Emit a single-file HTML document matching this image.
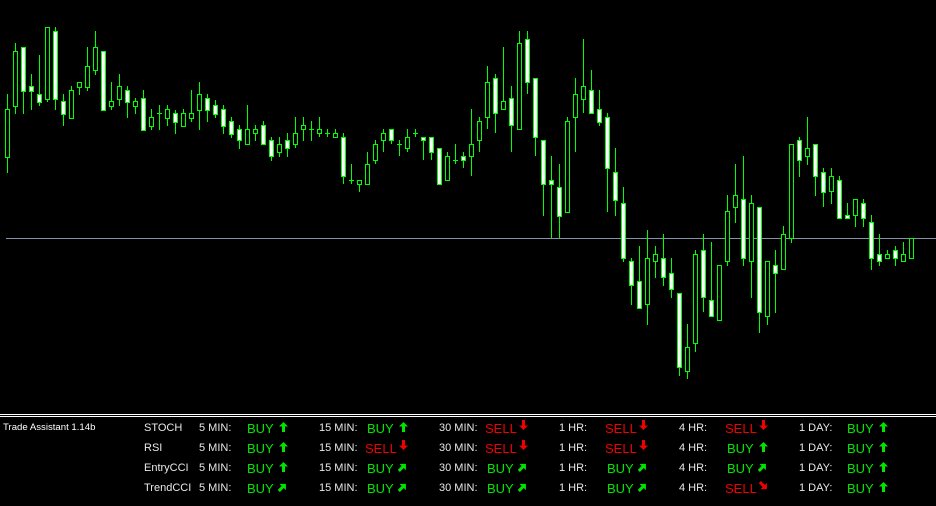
<!DOCTYPE html>
<html><head><meta charset="utf-8"><style>
html,body{margin:0;padding:0;background:#000;width:936px;height:506px;overflow:hidden;position:relative;font-family:"Liberation Sans",Arial,sans-serif}
svg.c{position:absolute;left:0;top:0}
.t{position:absolute;color:#fff;font-size:11px;line-height:12px;white-space:nowrap}
.l{color:#e8e8e8}
</style></head><body>
<svg class="c" width="936" height="506" viewBox="0 0 936 506" shape-rendering="crispEdges">
<line x1="6" y1="238.5" x2="936" y2="238.5" stroke="#8592a8" stroke-width="1"/>
<path stroke="#00ff00" stroke-width="1" fill="none" d="M7.5 94V173M15.5 43V114M23.5 47V114M31.5 74V110M39.5 55V106M47.5 27V102M55.5 27V110M63.5 94V126M71.5 86V118M79.5 82V95M87.5 47V91M95.5 31V75M103.5 51V110M111.5 82V110M119.5 74V106M127.5 86V118M135.5 98V114M143.5 90V130M151.5 109V130M159.5 105V130M167.5 105V126M175.5 110V134M183.5 109V126M191.5 90V122M199.5 82V130M207.5 94V122M215.5 100V118M223.5 105V134M231.5 117V138M239.5 125V149M247.5 105V144M255.5 125V141M263.5 121V144M271.5 137V161M279.5 137V157M287.5 133V157M295.5 117V148M303.5 117V141M311.5 121V141M319.5 117V137M327.5 129V137M335.5 129V137M343.5 133V184M351.5 164V184M359.5 180V192M367.5 152V184M375.5 140V164M383.5 129V152M391.5 129V144M399.5 140V156M407.5 129V152M415.5 129V137M423.5 137V160M431.5 137V160M439.5 148V184M447.5 152V180M455.5 144V164M463.5 152V168M471.5 109V176M479.5 117V152M487.5 66V129M495.5 74V133M503.5 47V109M511.5 86V152M519.5 31V129M527.5 31V94M535.5 78V156M543.5 140V216M551.5 156V238M559.5 164V238M567.5 117V212M575.5 78V152M583.5 39V113M591.5 70V113M599.5 90V126M607.5 113V212M615.5 148V216M623.5 187V262M631.5 258V305M639.5 246V308M647.5 230V325M655.5 246V278M663.5 234V286M671.5 258V298M679.5 293V376M687.5 324V379M695.5 250V352M703.5 234V312M711.5 242V316M719.5 265V320M727.5 195V266M735.5 164V223M743.5 156V266M751.5 195V298M759.5 207V333M767.5 261V325M775.5 250V313M783.5 226V269M791.5 144V243M799.5 137V177M807.5 117V165M815.5 144V196M823.5 168V207M831.5 168V204M839.5 176V218M847.5 203V218M855.5 199V227M863.5 199V227M871.5 215V270M879.5 234V266M887.5 250V258M895.5 246V266M903.5 242V261M911.5 238V258
M157 113.5H162M309 129.5H314M325 133.5H330M349 180.5H354M397 144.5H402M413 133.5H418M453 160.5H458"/>
<g stroke="#00ff00" stroke-width="1" fill="#000">
<rect x="5.5" y="109.5" width="4" height="48"/><rect x="13.5" y="51.5" width="4" height="55"/><rect x="45.5" y="27.5" width="4" height="72"/><rect x="69.5" y="90.5" width="4" height="28"/><rect x="77.5" y="82.5" width="4" height="5"/><rect x="85.5" y="66.5" width="4" height="21"/><rect x="93.5" y="47.5" width="4" height="23"/><rect x="109.5" y="101.5" width="4" height="5"/><rect x="117.5" y="86.5" width="4" height="13"/><rect x="133.5" y="101.5" width="4" height="5"/><rect x="149.5" y="117.5" width="4" height="9"/><rect x="165.5" y="109.5" width="4" height="9"/><rect x="181.5" y="113.5" width="4" height="13"/><rect x="189.5" y="113.5" width="4" height="5"/><rect x="197.5" y="94.5" width="4" height="16"/><rect x="245.5" y="129.5" width="4" height="15"/><rect x="253.5" y="129.5" width="4" height="4"/><rect x="277.5" y="144.5" width="4" height="8"/><rect x="293.5" y="133.5" width="4" height="11"/><rect x="301.5" y="125.5" width="4" height="4"/><rect x="317.5" y="129.5" width="4" height="4"/><rect x="333.5" y="133.5" width="4" height="4"/><rect x="357.5" y="180.5" width="4" height="4"/><rect x="365.5" y="164.5" width="4" height="20"/><rect x="373.5" y="144.5" width="4" height="16"/><rect x="381.5" y="133.5" width="4" height="7"/><rect x="405.5" y="137.5" width="4" height="11"/><rect x="445.5" y="156.5" width="4" height="24"/><rect x="469.5" y="144.5" width="4" height="12"/><rect x="477.5" y="121.5" width="4" height="19"/><rect x="485.5" y="82.5" width="4" height="35"/><rect x="501.5" y="101.5" width="4" height="8"/><rect x="517.5" y="43.5" width="4" height="86"/><rect x="565.5" y="121.5" width="4" height="91"/><rect x="573.5" y="94.5" width="4" height="23"/><rect x="581.5" y="86.5" width="4" height="13"/><rect x="645.5" y="258.5" width="4" height="46"/><rect x="653.5" y="254.5" width="4" height="7"/><rect x="685.5" y="347.5" width="4" height="24"/><rect x="693.5" y="254.5" width="4" height="89"/><rect x="717.5" y="265.5" width="4" height="55"/><rect x="725.5" y="211.5" width="4" height="50"/><rect x="733.5" y="195.5" width="4" height="12"/><rect x="749.5" y="203.5" width="4" height="58"/><rect x="765.5" y="261.5" width="4" height="55"/><rect x="781.5" y="234.5" width="4" height="35"/><rect x="789.5" y="144.5" width="4" height="94"/><rect x="805.5" y="148.5" width="4" height="8"/><rect x="829.5" y="176.5" width="4" height="15"/><rect x="853.5" y="199.5" width="4" height="16"/><rect x="885.5" y="254.5" width="4" height="4"/><rect x="901.5" y="254.5" width="4" height="7"/><rect x="909.5" y="238.5" width="4" height="20"/>
</g>
<g stroke="#00ff00" stroke-width="1" fill="#fff">
<rect x="21.5" y="47.5" width="4" height="44"/><rect x="29.5" y="86.5" width="4" height="5"/><rect x="37.5" y="94.5" width="4" height="8"/><rect x="53.5" y="31.5" width="4" height="68"/><rect x="61.5" y="101.5" width="4" height="13"/><rect x="101.5" y="51.5" width="4" height="59"/><rect x="125.5" y="90.5" width="4" height="12"/><rect x="141.5" y="98.5" width="4" height="32"/><rect x="173.5" y="113.5" width="4" height="9"/><rect x="205.5" y="98.5" width="4" height="12"/><rect x="213.5" y="105.5" width="4" height="9"/><rect x="221.5" y="109.5" width="4" height="17"/><rect x="229.5" y="121.5" width="4" height="13"/><rect x="237.5" y="129.5" width="4" height="11"/><rect x="261.5" y="125.5" width="4" height="19"/><rect x="269.5" y="140.5" width="4" height="16"/><rect x="285.5" y="140.5" width="4" height="8"/><rect x="341.5" y="137.5" width="4" height="39"/><rect x="389.5" y="129.5" width="4" height="11"/><rect x="421.5" y="137.5" width="4" height="3"/><rect x="429.5" y="137.5" width="4" height="15"/><rect x="437.5" y="148.5" width="4" height="36"/><rect x="461.5" y="156.5" width="4" height="4"/><rect x="493.5" y="78.5" width="4" height="35"/><rect x="509.5" y="98.5" width="4" height="27"/><rect x="525.5" y="39.5" width="4" height="43"/><rect x="533.5" y="78.5" width="4" height="59"/><rect x="541.5" y="140.5" width="4" height="44"/><rect x="549.5" y="180.5" width="4" height="4"/><rect x="557.5" y="187.5" width="4" height="29"/><rect x="589.5" y="90.5" width="4" height="23"/><rect x="597.5" y="109.5" width="4" height="13"/><rect x="605.5" y="117.5" width="4" height="51"/><rect x="613.5" y="172.5" width="4" height="28"/><rect x="621.5" y="203.5" width="4" height="55"/><rect x="629.5" y="261.5" width="4" height="24"/><rect x="637.5" y="281.5" width="4" height="27"/><rect x="661.5" y="258.5" width="4" height="19"/><rect x="669.5" y="273.5" width="4" height="16"/><rect x="677.5" y="293.5" width="4" height="74"/><rect x="701.5" y="250.5" width="4" height="47"/><rect x="709.5" y="300.5" width="4" height="16"/><rect x="741.5" y="199.5" width="4" height="59"/><rect x="757.5" y="207.5" width="4" height="105"/><rect x="773.5" y="265.5" width="4" height="8"/><rect x="797.5" y="140.5" width="4" height="20"/><rect x="813.5" y="144.5" width="4" height="32"/><rect x="821.5" y="172.5" width="4" height="20"/><rect x="837.5" y="180.5" width="4" height="38"/><rect x="845.5" y="215.5" width="4" height="3"/><rect x="861.5" y="203.5" width="4" height="15"/><rect x="869.5" y="222.5" width="4" height="36"/><rect x="877.5" y="254.5" width="4" height="7"/><rect x="893.5" y="250.5" width="4" height="8"/>
</g>
<rect x="0" y="414" width="936" height="1" fill="#fff"/>
<rect x="0" y="416" width="936" height="1" fill="#fff"/>
</svg>

<div class="t" style="left:3px;top:422px;font-size:9.6px">Trade Assistant 1.14b</div>

<div class="t l" style="left:144px;top:422px">STOCH</div>
<div class="t l" style="left:144px;top:442px">RSI</div>
<div class="t l" style="left:144px;top:462px">EntryCCI</div>
<div class="t l" style="left:144px;top:482px">TrendCCI</div>

<svg class="c" width="936" height="506" viewBox="0 0 936 506" style="font-family:'Liberation Sans',Arial,sans-serif">
<defs><path id="ar" d="M4.5 0L9 4.5H6V10H3V4.5H0Z"/></defs>
<g fill="#e8e8e8" font-size="11">
<text x="199" y="431">5 MIN:</text><text x="199" y="451">5 MIN:</text><text x="199" y="471">5 MIN:</text><text x="199" y="491">5 MIN:</text>
<text x="319" y="431">15 MIN:</text><text x="319" y="451">15 MIN:</text><text x="319" y="471">15 MIN:</text><text x="319" y="491">15 MIN:</text>
<text x="439" y="431">30 MIN:</text><text x="439" y="451">30 MIN:</text><text x="439" y="471">30 MIN:</text><text x="439" y="491">30 MIN:</text>
<text x="559" y="431">1 HR:</text><text x="559" y="451">1 HR:</text><text x="559" y="471">1 HR:</text><text x="559" y="491">1 HR:</text>
<text x="679" y="431">4 HR:</text><text x="679" y="451">4 HR:</text><text x="679" y="471">4 HR:</text><text x="679" y="491">4 HR:</text>
<text x="799" y="431">1 DAY:</text><text x="799" y="451">1 DAY:</text><text x="799" y="471">1 DAY:</text><text x="799" y="491">1 DAY:</text>
</g>
<g font-size="13" fill="#00e600">
<text x="247" y="433">BUY</text><text x="367" y="433">BUY</text><text x="847" y="433">BUY</text>
<text x="247" y="453">BUY</text><text x="727" y="453">BUY</text><text x="847" y="453">BUY</text>
<text x="247" y="473">BUY</text><text x="367" y="473">BUY</text><text x="487" y="473">BUY</text><text x="607" y="473">BUY</text><text x="727" y="473">BUY</text><text x="847" y="473">BUY</text>
<text x="247" y="493">BUY</text><text x="367" y="493">BUY</text><text x="487" y="493">BUY</text><text x="607" y="493">BUY</text><text x="847" y="493">BUY</text>
</g>
<g font-size="13" fill="#f00000">
<text x="485" y="433">SELL</text><text x="605" y="433">SELL</text><text x="725" y="433">SELL</text>
<text x="365" y="453">SELL</text><text x="485" y="453">SELL</text><text x="605" y="453">SELL</text>
<text x="725" y="493">SELL</text>
</g>
<g fill="#00e600">
<use href="#ar" x="279" y="422"/><use href="#ar" x="399" y="422"/><use href="#ar" x="879" y="422"/>
<use href="#ar" x="279" y="442"/><use href="#ar" x="759" y="442"/><use href="#ar" x="879" y="442"/>
<use href="#ar" x="279" y="462"/><use href="#ar" x="879" y="462"/><use href="#ar" x="879" y="482"/>
<use href="#ar" transform="rotate(45 402 467)" x="398" y="462"/>
<use href="#ar" transform="rotate(45 522 467)" x="518" y="462"/>
<use href="#ar" transform="rotate(45 642 467)" x="638" y="462"/>
<use href="#ar" transform="rotate(45 762 467)" x="758" y="462"/>
<use href="#ar" transform="rotate(45 282 487)" x="278" y="482"/>
<use href="#ar" transform="rotate(45 402 487)" x="398" y="482"/>
<use href="#ar" transform="rotate(45 522 487)" x="518" y="482"/>
<use href="#ar" transform="rotate(45 642 487)" x="638" y="482"/>
</g>
<g fill="#f00000">
<use href="#ar" transform="rotate(180 523 425)" x="518" y="420"/>
<use href="#ar" transform="rotate(180 643 425)" x="638" y="420"/>
<use href="#ar" transform="rotate(180 763 425)" x="758" y="420"/>
<use href="#ar" transform="rotate(180 403 445)" x="398" y="440"/>
<use href="#ar" transform="rotate(180 523 445)" x="518" y="440"/>
<use href="#ar" transform="rotate(180 643 445)" x="638" y="440"/>
<use href="#ar" transform="rotate(135 763 486)" x="758" y="481"/>
</g>
</svg>
</body></html>
